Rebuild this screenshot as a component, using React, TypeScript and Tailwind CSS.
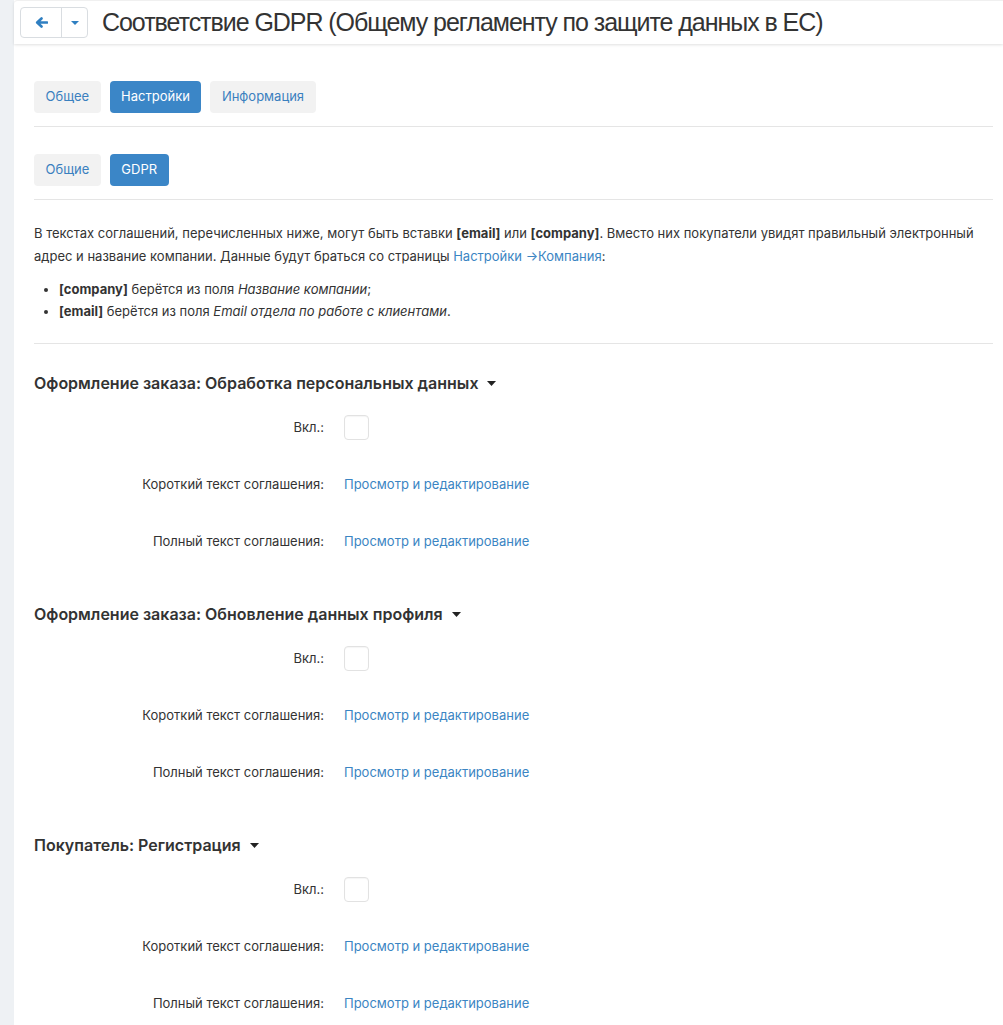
import React from "react";

const font = { fontFamily: 'Inter, "Liberation Sans", Arial, sans-serif' };

function Caret() {
  return (
    <svg width="9" height="5" viewBox="0 0 9 5" className="inline-block ml-[9px] align-middle">
      <path d="M0 0 L9 0 L4.5 5 Z" fill="#222" />
    </svg>
  );
}

function Row({ label, children }: { label: string; children: React.ReactNode }) {
  return (
    <div className="flex items-center h-[57px]">
      <div className="w-[310px] shrink-0 text-right text-[13px] text-[#333] pr-[20px]">{label}</div>
      <div className="text-[13px]">{children}</div>
    </div>
  );
}

function Section({ title }: { title: string }) {
  return (
    <div className="mb-[32px]">
      <div className="h-[24px] flex items-center text-[16px] font-semibold text-[#333]">
        {title}
        <Caret />
      </div>
      <div className="mt-[4px]">
        <Row label="Вкл.:">
          <div className="w-[25px] h-[25px] rounded-[4px] border border-[#e2e2e2] bg-white shadow-[inset_0_1px_1px_rgba(0,0,0,0.04)]" />
        </Row>
        <Row label="Короткий текст соглашения:">
          <span className="text-[#3b85c3]">Просмотр и редактирование</span>
        </Row>
        <Row label="Полный текст соглашения:">
          <span className="text-[#3b85c3]">Просмотр и редактирование</span>
        </Row>
      </div>
    </div>
  );
}

function Tab({ children, active }: { children: React.ReactNode; active?: boolean }) {
  return (
    <div
      className={
        "h-[32px] px-[11.5px] flex items-center rounded-[4px] text-[13px] " +
        (active ? "bg-[#3b86c7] text-white" : "bg-[#f2f2f2] text-[#3a80bf]")
      }
    >
      {children}
    </div>
  );
}

export default function App() {
  return (
    <div className="flex min-h-screen bg-white" style={font}>
      <div className="w-[14px] shrink-0 bg-[#eef1f4]" />
      <div className="flex-1 min-w-0">
        <div className="h-[44px] flex items-center pl-[6px] rounded-tl-[4px] border-t border-[#f0f0f0] shadow-[0_1px_3px_rgba(0,0,0,0.12)] bg-white">
          <div className="flex h-[31px] border border-[#d9dde1] rounded-[4px] bg-white">
            <div className="w-[41px] flex items-center justify-center border-r border-[#d9dde1]">
              <svg width="13" height="11" viewBox="0 0 13 11">
                <path d="M12 5.5 H3 M6.5 1.5 L2.2 5.5 L6.5 9.5" stroke="#2f7fc1" strokeWidth="2.6" fill="none" strokeLinecap="round" strokeLinejoin="round" />
              </svg>
            </div>
            <div className="w-[25px] flex items-center justify-center">
              <svg width="8" height="4" viewBox="0 0 8 4">
                <path d="M0 0 H8 L4 4 Z" fill="#2f7fc1" />
              </svg>
            </div>
          </div>
          <h1
            className="ml-[14px] text-[25px] tracking-[-1.05px] text-[#333] leading-none"
            style={{ fontFamily: '"Liberation Sans", Arial, sans-serif' }}
          >
            Соответствие GDPR (Общему регламенту по защите данных в ЕС)
          </h1>
        </div>

        <div className="pl-[20px] pr-[10px]">
          <div className="flex gap-[9px] mt-[37px]">
            <Tab>Общее</Tab>
            <Tab active>Настройки</Tab>
            <Tab>Информация</Tab>
          </div>
          <div className="mt-[13px] border-t border-[#e5e5e5]" />
          <div className="flex gap-[9px] mt-[27px]">
            <Tab>Общие</Tab>
            <Tab active>GDPR</Tab>
          </div>
          <div className="mt-[13px] border-t border-[#e5e5e5]" />

          <p className="mt-[22px] text-[13px] leading-[23px] text-[#333]">
            В текстах соглашений, перечисленных ниже, могут быть вставки <b>[email]</b> или <b>[company]</b>. Вместо них покупатели увидят правильный электронный адрес и название компании. Данные будут браться со страницы{" "}
            <span className="text-[#3b85c3]">Настройки →Компания</span>:
          </p>
          <ul className="mt-[10px] pl-[25px] list-disc text-[13px] leading-[22px] text-[#333]">
            <li>
              <b>[company]</b> берётся из поля <i>Название компании</i>;
            </li>
            <li>
              <b>[email]</b> берётся из поля <i>Email отдела по работе с клиентами</i>.
            </li>
          </ul>
          <div className="mt-[21px] border-t border-[#e5e5e5]" />

          <div className="mt-[27px]">
            <Section title="Оформление заказа: Обработка персональных данных" />
            <Section title="Оформление заказа: Обновление данных профиля" />
            <Section title="Покупатель: Регистрация" />
          </div>
        </div>
      </div>
    </div>
  );
}
